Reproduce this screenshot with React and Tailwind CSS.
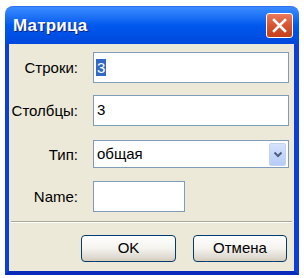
import React from "react";

const font = { fontFamily: '"Liberation Sans", Arial, sans-serif' };

function Field({ label, children }) {
  return (
    <div className="flex items-center">
      <div className="w-[69px] text-right text-[15px] text-black leading-none">{label}</div>
      <div className="ml-[15px]">{children}</div>
    </div>
  );
}

function XpButton({ children, w }) {
  return (
    <button
      className={`${w} h-[27px] rounded-[4px] border border-[#003C74] bg-gradient-to-b from-white via-[#F4F3EE] to-[#D6D0C5] text-[15px] text-black shadow-[inset_0_-2px_0_#D8D2BD]`}
    >
      {children}
    </button>
  );
}

export default function App() {
  return (
    <div className="w-[304px] h-[278px] bg-white overflow-hidden" style={font}>
      <div className="ml-[5px] mt-[6px] w-[294px] flex flex-col">
        {/* title bar */}
        <div className="h-[38px] rounded-t-[8px] bg-gradient-to-b from-[#3A8CFF] via-[#0058EE] to-[#0048DC] border-t border-[#2F6CF0] flex items-center pl-[8px] pr-[6px]">
          <span className="text-white font-bold text-[17px] [text-shadow:1px_1px_0_#0A1E8A] tracking-[0.2px]">
            Матрица
          </span>
          <div className="ml-auto w-[27px] h-[25px] rounded-[3px] border border-white bg-gradient-to-b from-[#E97A5C] via-[#D9532F] to-[#C3401B] flex items-center justify-center">
            <svg width="15" height="15" viewBox="0 0 15 15">
              <path d="M2 2 L13 13 M13 2 L2 13" stroke="white" strokeWidth="2.6" strokeLinecap="square" />
            </svg>
          </div>
        </div>

        {/* body */}
        <div className="h-[231px] bg-[#ECE9D8] border-l-[4px] border-r-[5px] border-b-[4px] border-l-[#0B3FD8] border-r-[#0B3FD8] border-b-[#0A2BB8] flex flex-col pt-[8px]">
          <Field label="Строки:">
            <div className="w-[196px] h-[31px] border border-[#7F9DB9] bg-white flex items-center pl-[2px]">
              <span className="bg-[#316AC5] text-white text-[15px] leading-[17px] px-[1px]">3</span>
            </div>
          </Field>
          <div className="h-[12px]" />
          <Field label="Столбцы:">
            <div className="w-[196px] h-[31px] border border-[#7F9DB9] bg-white flex items-center pl-[3px] text-[15px]">
              3
            </div>
          </Field>
          <div className="h-[14px]" />
          <Field label="Тип:">
            <div className="w-[196px] h-[28px] border border-[#7F9DB9] bg-white flex items-center pl-[3px] pr-[2px] text-[15px]">
              <span>общая</span>
              <div className="ml-auto w-[17px] h-[23px] rounded-[2px] bg-gradient-to-b from-[#D5E3FD] to-[#B6CBF7] border border-[#C3D3F6] flex items-center justify-center">
                <svg width="10" height="7" viewBox="0 0 10 7">
                  <path d="M1.5 1.5 L5 5 L8.5 1.5" stroke="#4D6185" strokeWidth="2" fill="none" />
                </svg>
              </div>
            </div>
          </Field>
          <div className="h-[13px]" />
          <Field label="Name:">
            <div className="w-[92px] h-[31px] border border-[#7F9DB9] bg-white" />
          </Field>
          <div className="mt-[9px] mx-[2px] border-t border-[#ACA899] border-b border-b-white" />
          <div className="mt-[12px] flex justify-end pr-[7px] gap-[17px]">
            <XpButton w="w-[95px]">OK</XpButton>
            <XpButton w="w-[94px]">Отмена</XpButton>
          </div>
        </div>
      </div>
    </div>
  );
}
